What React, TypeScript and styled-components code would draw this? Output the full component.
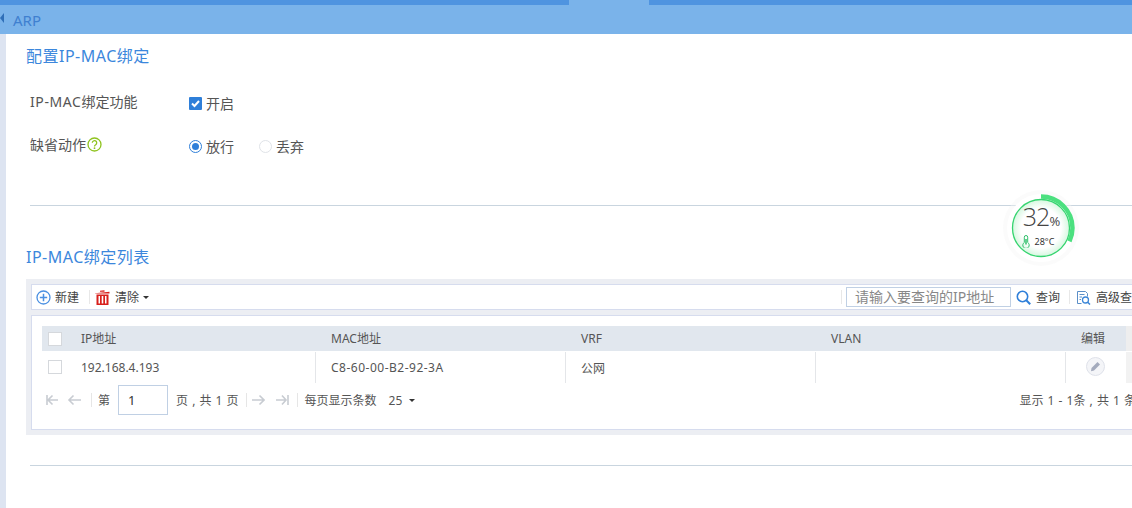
import React from "react";
import styled, { createGlobalStyle } from "styled-components";

const Global = createGlobalStyle`
  html, body { margin: 0; padding: 0; background: #fff; }
  body { font-family: "Noto Sans", "Noto Sans CJK SC", sans-serif; font-size: 12px; color: #555; }
  * { box-sizing: border-box; }
`;

const Page = styled.div`
  position: relative;
  width: 1132px;
  height: 508px;
  overflow: hidden;
  background: #fff;
`;
const TopBar = styled.div`
  height: 5px;
  background: #4f94e0;
  display: flex;
  padding-left: 569px;
`;
const ActiveTab = styled.div`
  width: 80px;
  background: #7ab3ea;
`;
const TitleBar = styled.div`
  height: 29px;
  background: #7ab3ea;
  display: flex;
  align-items: center;
  color: #3f80d0;
  font-size: 15px;
  padding-left: 13px;
`;
const Collapse = styled.span`
  position: absolute;
  left: 0;
  top: 13px;
  width: 0;
  height: 0;
  border-top: 5px solid transparent;
  border-bottom: 5px solid transparent;
  border-right: 4px solid #2f6fb8;
`;
const Body = styled.div`
  display: flex;
  height: 474px;
`;
const SideStrip = styled.div`
  width: 6px;
  flex: none;
  background: #dde4f1;
`;
const Main = styled.div`
  flex: 1;
  min-width: 0;
  padding-left: 20px;
`;
const SectionTitle = styled.h2<{ $top: number; $bottom: number }>`
  margin: ${(p) => p.$top}px 0 ${(p) => p.$bottom}px;
  height: 24px;
  line-height: 24px;
  font-size: 16px;
  font-weight: 400;
  color: #3c87dc;
  letter-spacing: 0.5px;
`;
const FormRow = styled.div<{ $height: number }>`
  display: flex;
  align-items: center;
  height: ${(p) => p.$height}px;
  padding-left: 4px;
`;
const FieldLabel = styled.div`
  width: 159px;
  flex: none;
  font-size: 14px;
  color: #555;
  display: flex;
  align-items: center;
  gap: 1px;
  position: relative;
  top: -2px;
`;
const Latin = styled.span`
  letter-spacing: 0.6px;
`;
const Option = styled.label<{ $width?: number }>`
  display: flex;
  align-items: center;
  gap: 4px;
  font-size: 14px;
  color: #555;
  width: ${(p) => (p.$width ? `${p.$width}px` : "auto")};
`;
const CheckedBox = styled.span`
  width: 13px;
  height: 13px;
  background: #2f7fd9;
  display: flex;
  align-items: center;
  justify-content: center;
  border-radius: 1px;
`;
const Radio = styled.span<{ $on?: boolean }>`
  width: 13px;
  height: 13px;
  border-radius: 50%;
  border: 1px solid ${(p) => (p.$on ? "#2f7fd9" : "#e0e3e8")};
  display: flex;
  align-items: center;
  justify-content: center;
  &::after {
    content: "";
    width: 7px;
    height: 7px;
    border-radius: 50%;
    background: ${(p) => (p.$on ? "#2f7fd9" : "transparent")};
  }
`;
const Divider = styled.div<{ $top: number }>`
  height: 1px;
  background: #c9d5df;
  margin: ${(p) => p.$top}px 0 0 4px;
`;
const Panel = styled.div`
  width: 1200px;
  height: 156px;
  background: #eceef3;
  padding: 5px;
`;
const Toolbar = styled.div`
  height: 26px;
  background: #fff;
  border: 1px solid #d6dcee;
  display: flex;
  align-items: center;
  padding-left: 4px;
  font-size: 12px;
  color: #444;
`;
const ToolButton = styled.span<{ $left?: number; $gap?: number }>`
  display: flex;
  align-items: center;
  gap: ${(p) => p.$gap ?? 5}px;
  white-space: nowrap;
  margin-left: ${(p) => p.$left ?? 0}px;
`;
const ToolSep = styled.span<{ $left: number; $right: number }>`
  width: 1px;
  height: 14px;
  background: #e8e8e8;
  margin: 0 ${(p) => p.$right}px 0 ${(p) => p.$left}px;
`;
const Caret = styled.span`
  width: 0;
  height: 0;
  border-left: 3px solid transparent;
  border-right: 3px solid transparent;
  border-top: 3px solid #333;
  margin-left: -1px;
`;
const SearchInput = styled.div`
  width: 165px;
  height: 20px;
  border: 1px solid #c0d0e4;
  font-size: 14px;
  line-height: 18px;
  color: #888;
  padding-left: 8px;
  white-space: nowrap;
  overflow: hidden;
`;
const TableBox = styled.div`
  margin-top: 5px;
  height: 115px;
  background: #fff;
  border: 1px solid #d6dcee;
  padding: 10px 0 0 10px;
`;
const Grid = styled.div`
  display: grid;
  grid-template-columns: 24px 250px 250px 250px 250px 60px 80px;
  margin-bottom: 2px;
`;
const HeadCell = styled.div<{ $off?: boolean }>`
  height: 25px;
  line-height: 25px;
  background: ${(p) => (p.$off ? "#eeeeee" : "#e1e7ee")};
  padding-left: 15px;
  color: #555;
  font-size: 12px;
  display: flex;
  align-items: center;
`;
const RowCell = styled.div<{ $line?: boolean; $off?: boolean; $spacing?: number }>`
  height: 31px;
  padding-left: 15px;
  color: #555;
  font-size: 12px;
  letter-spacing: ${(p) => p.$spacing ?? 0}px;
  display: flex;
  align-items: center;
  background: ${(p) => (p.$off ? "#f2f2f2" : "#fff")};
  box-shadow: ${(p) => (p.$line ? "-1px 0 0 #e4e6e9" : "none")};
  margin-top: 1px;
`;
const BoxCell = styled.div<{ $bg?: string; $height: number }>`
  height: ${(p) => p.$height}px;
  background: ${(p) => p.$bg || "transparent"};
  padding-left: 6px;
  display: flex;
  align-items: center;
`;
const RowCheck = styled.span`
  width: 14px;
  height: 14px;
  background: #fff;
  border: 1px solid #d5d8dc;
`;
const PencilButton = styled.span`
  width: 19px;
  height: 19px;
  border-radius: 50%;
  border: 1px solid #dfe2ea;
  background: #f4f5f8;
  display: flex;
  align-items: center;
  justify-content: center;
  margin-left: 5px;
  margin-top: -2px;
`;
const Pager = styled.div`
  width: 1094px;
  display: flex;
  align-items: center;
  height: 30px;
  padding-left: 3px;
  color: #555;
  font-size: 12px;
`;
const PagerSep = styled.span<{ $left: number; $right: number }>`
  width: 1px;
  height: 14px;
  background: #e6e6e6;
  margin: 0 ${(p) => p.$right}px 0 ${(p) => p.$left}px;
`;
const PageInput = styled.span`
  width: 50px;
  height: 30px;
  border: 1px solid #c0d0e4;
  margin: 0 8px;
  padding-left: 9px;
  line-height: 28px;
  font-size: 13px;
  color: #333;
`;
const PagerIcon = styled.svg<{ $right: number }>`
  margin-right: ${(p) => p.$right}px;
  flex: none;
`;
const PageText = styled.span`
  word-spacing: 1px;
  white-space: nowrap;
`;
const PageSize = styled.span`
  margin-left: 12px;
  margin-right: 6px;
`;
const PagerCaret = styled(Caret)`
  margin-left: 1px;
`;
const PagerInfo = styled.span`
  margin-left: auto;
  white-space: nowrap;
  word-spacing: 1px;
`;
const Gauge = styled.div`
  position: absolute;
  left: 1003px;
  top: 190px;
  width: 76px;
  height: 76px;
  border-radius: 50%;
  background: rgba(245, 245, 245, 0.4);
  display: flex;
  align-items: center;
  justify-content: center;
`;
const GaugeRing = styled.svg`
  position: absolute;
  inset: 0;
`;
const GaugeText = styled.div`
  position: relative;
  display: flex;
  flex-direction: column;
  align-items: center;
  color: #444;
`;
const Pct = styled.div`
  font-family: "Open Sans", sans-serif;
  font-weight: 300;
  font-size: 25px;
  line-height: 26px;
  letter-spacing: -1px;
  margin-top: -5px;
  margin-left: 1px;
  span { font-size: 13px; letter-spacing: 0; font-weight: 400; }
`;
const Temp = styled.div`
  display: flex;
  align-items: center;
  gap: 5px;
  font-size: 9px;
  line-height: 12px;
  color: #333;
  margin-top: 1px;
  margin-left: -6px;
`;

const First = () => (
  <path d="M2 1v10M13 6H3.500M7.500 1.500 3 6l4.500 4.500" fill="none" stroke="#c8ccd2" strokeWidth="1.600" />
);
const Prev = () => (
  <path d="M14 6H2M6.500 1.500 2 6l4.500 4.500" fill="none" stroke="#c8ccd2" strokeWidth="1.600" />
);
const Next = () => (
  <path d="M1 6h12M8.500 1.500 13 6l-4.500 4.500" fill="none" stroke="#c8ccd2" strokeWidth="1.600" />
);
const Last = () => (
  <path d="M13 1v10M1 6h9.500M7 1.500 11 6l-4 4.500" fill="none" stroke="#c8ccd2" strokeWidth="1.600" />
);

export default function App() {
  return (
    <Page>
      <Global />
      <TopBar><ActiveTab /></TopBar>
      <TitleBar>ARP</TitleBar>
      <Collapse />
      <Body>
        <SideStrip />
        <Main>
          <SectionTitle $top={10} $bottom={14}>配置IP-MAC绑定</SectionTitle>
          <FormRow $height={42}>
            <FieldLabel><span><Latin>IP-MAC</Latin>绑定功能</span></FieldLabel>
            <Option>
              <CheckedBox>
                <svg width="11" height="11" viewBox="0 0 11 11"><path d="M2 5.500 4.500 8 9 3" fill="none" stroke="#fff" strokeWidth="2" /></svg>
              </CheckedBox>
              开启
            </Option>
          </FormRow>
          <FormRow $height={44}>
            <FieldLabel>
              缺省动作
              <svg width="15" height="15" viewBox="0 0 15 15">
                <circle cx="7.500" cy="7.500" r="6.500" fill="none" stroke="#8fc31f" strokeWidth="1.300" />
                <path d="M5.300 5.800a2.200 2.200 0 1 1 3.400 1.900c-.8.500-1.200.9-1.200 1.800" fill="none" stroke="#8fc31f" strokeWidth="1.300" />
                <circle cx="7.500" cy="11.200" r=".9" fill="#8fc31f" />
              </svg>
            </FieldLabel>
            <Option $width={70}><Radio $on />放行</Option>
            <Option><Radio />丢弃</Option>
          </FormRow>
          <Divider $top={37} />
          <SectionTitle $top={39} $bottom={10}>IP-MAC绑定列表</SectionTitle>
          <Panel>
            <Toolbar>
              <ToolButton $gap={4}>
                <svg width="15" height="15" viewBox="0 0 15 15">
                  <circle cx="7.500" cy="7.500" r="6.500" fill="none" stroke="#4a90e2" strokeWidth="1.300" />
                  <path d="M7.500 3.800v7.400M3.800 7.500h7.400" stroke="#4a90e2" strokeWidth="1.500" />
                </svg>
                新建
              </ToolButton>
              <ToolSep $left={10} $right={5} />
              <ToolButton>
                <svg width="15" height="15" viewBox="0 0 15 15" fill="#d8201c">
                  <path d="M0 3.200 14.500 1.800V3.400H0zM5 .8 9.500.3v1.500H5z" />
                  <path d="M1.500 4.500h12V15h-12zM3.500 6v7.500h1.500V6zM6.700 6v7.500h1.600V6zM10 6v7.500h1.500V6z" fillRule="evenodd" />
                </svg>
                清除
                <Caret />
              </ToolButton>
              <ToolSep $left={692} $right={4} />
              <SearchInput>请输入要查询的IP地址</SearchInput>
              <ToolButton $left={5}>
                <svg width="15" height="15" viewBox="0 0 15 15" fill="none" stroke="#2f7fd9" strokeWidth="1.600">
                  <circle cx="6.500" cy="6.500" r="5.200" />
                  <path d="M10.300 10.300 14.200 14.200" strokeWidth="2" />
                </svg>
                查询
              </ToolButton>
              <ToolSep $left={9} $right={6} />
              <ToolButton>
                <svg width="15" height="15" viewBox="0 0 15 15" fill="none" stroke="#5b8fc8" strokeWidth="1">
                  <path d="M5.500 13.500h-4v-12h8l2 2v3" />
                  <path d="M3.500 4.500h5M3.500 7h2.500M3.500 9.500h1.500" />
                  <circle cx="9.500" cy="10" r="3" stroke="#3b86d8" strokeWidth="1.300" />
                  <path d="M11.700 12.200 14 14.500" stroke="#3b86d8" strokeWidth="1.500" />
                </svg>
                高级查询
              </ToolButton>
            </Toolbar>
            <TableBox>
              <Grid>
                <BoxCell $bg="#e1e7ee" $height={25}><RowCheck /></BoxCell>
                <HeadCell>IP地址</HeadCell>
                <HeadCell>MAC地址</HeadCell>
                <HeadCell>VRF</HeadCell>
                <HeadCell>VLAN</HeadCell>
                <HeadCell>编辑</HeadCell>
                <HeadCell $off />
                <BoxCell $height={32}><RowCheck /></BoxCell>
                <RowCell>192.168.4.193</RowCell>
                <RowCell $line $spacing={0.5}>C8-60-00-B2-92-3A</RowCell>
                <RowCell $line>公网</RowCell>
                <RowCell $line />
                <RowCell $line>
                  <PencilButton>
                    <svg width="11" height="11" viewBox="0 0 11 11" fill="#a4abbd">
                      <path d="M7.500 1 10 3.500 4 9.500 1 10.300 1.500 7z" />
                    </svg>
                  </PencilButton>
                </RowCell>
                <RowCell $off />
              </Grid>
              <Pager>
                <PagerIcon $right={8} width="14" height="12" viewBox="0 0 14 12"><First /></PagerIcon>
                <PagerIcon $right={0} width="15" height="12" viewBox="0 0 15 12"><Prev /></PagerIcon>
                <PagerSep $left={9} $right={6} />
                <span>第</span>
                <PageInput>1</PageInput>
                <PageText>页 , 共 1 页</PageText>
                <PagerSep $left={7} $right={4} />
                <PagerIcon $right={10} width="14" height="12" viewBox="0 0 14 12"><Next /></PagerIcon>
                <PagerIcon $right={0} width="14" height="12" viewBox="0 0 14 12"><Last /></PagerIcon>
                <PagerSep $left={8} $right={7} />
                <span>每页显示条数</span>
                <PageSize>25</PageSize>
                <PagerCaret />
                <PagerInfo>显示 1 - 1条 , 共 1 条</PagerInfo>
              </Pager>
            </TableBox>
          </Panel>
          <Divider $top={30} />
        </Main>
      </Body>
      <Gauge>
        <GaugeRing width="76" height="76" viewBox="0 0 76 76">
          <defs>
            <radialGradient id="g" cx="50%" cy="50%" r="50%">
              <stop offset="70%" stopColor="#ffffff" />
              <stop offset="100%" stopColor="#d6f7e0" />
            </radialGradient>
          </defs>
          <circle cx="38" cy="38" r="34" fill="#fff" />
          <circle cx="38" cy="38" r="28.500" fill="url(#g)" stroke="#35d46f" strokeWidth="1.300" />
          <circle
            cx="38"
            cy="38"
            r="31.500"
            fill="none"
            stroke="#4be07f"
            strokeWidth="4.500"
            pathLength="100"
            strokeDasharray="32 68"
            transform="rotate(-90 38 38)"
          />
        </GaugeRing>
        <GaugeText>
          <Pct>32<span>%</span></Pct>
          <Temp>
            <svg width="8" height="13" viewBox="0 0 8 13" fill="none" stroke="#2fbf6a" strokeWidth="1">
              <path d="M2.300 7.500V2.200a1.700 1.700 0 0 1 3.400 0v5.300a3.200 3.200 0 1 1-3.400 0z" />
              <path d="M4 4v5.500" strokeWidth="1.500" />
            </svg>
            28°C
          </Temp>
        </GaugeText>
      </Gauge>
    </Page>
  );
}
